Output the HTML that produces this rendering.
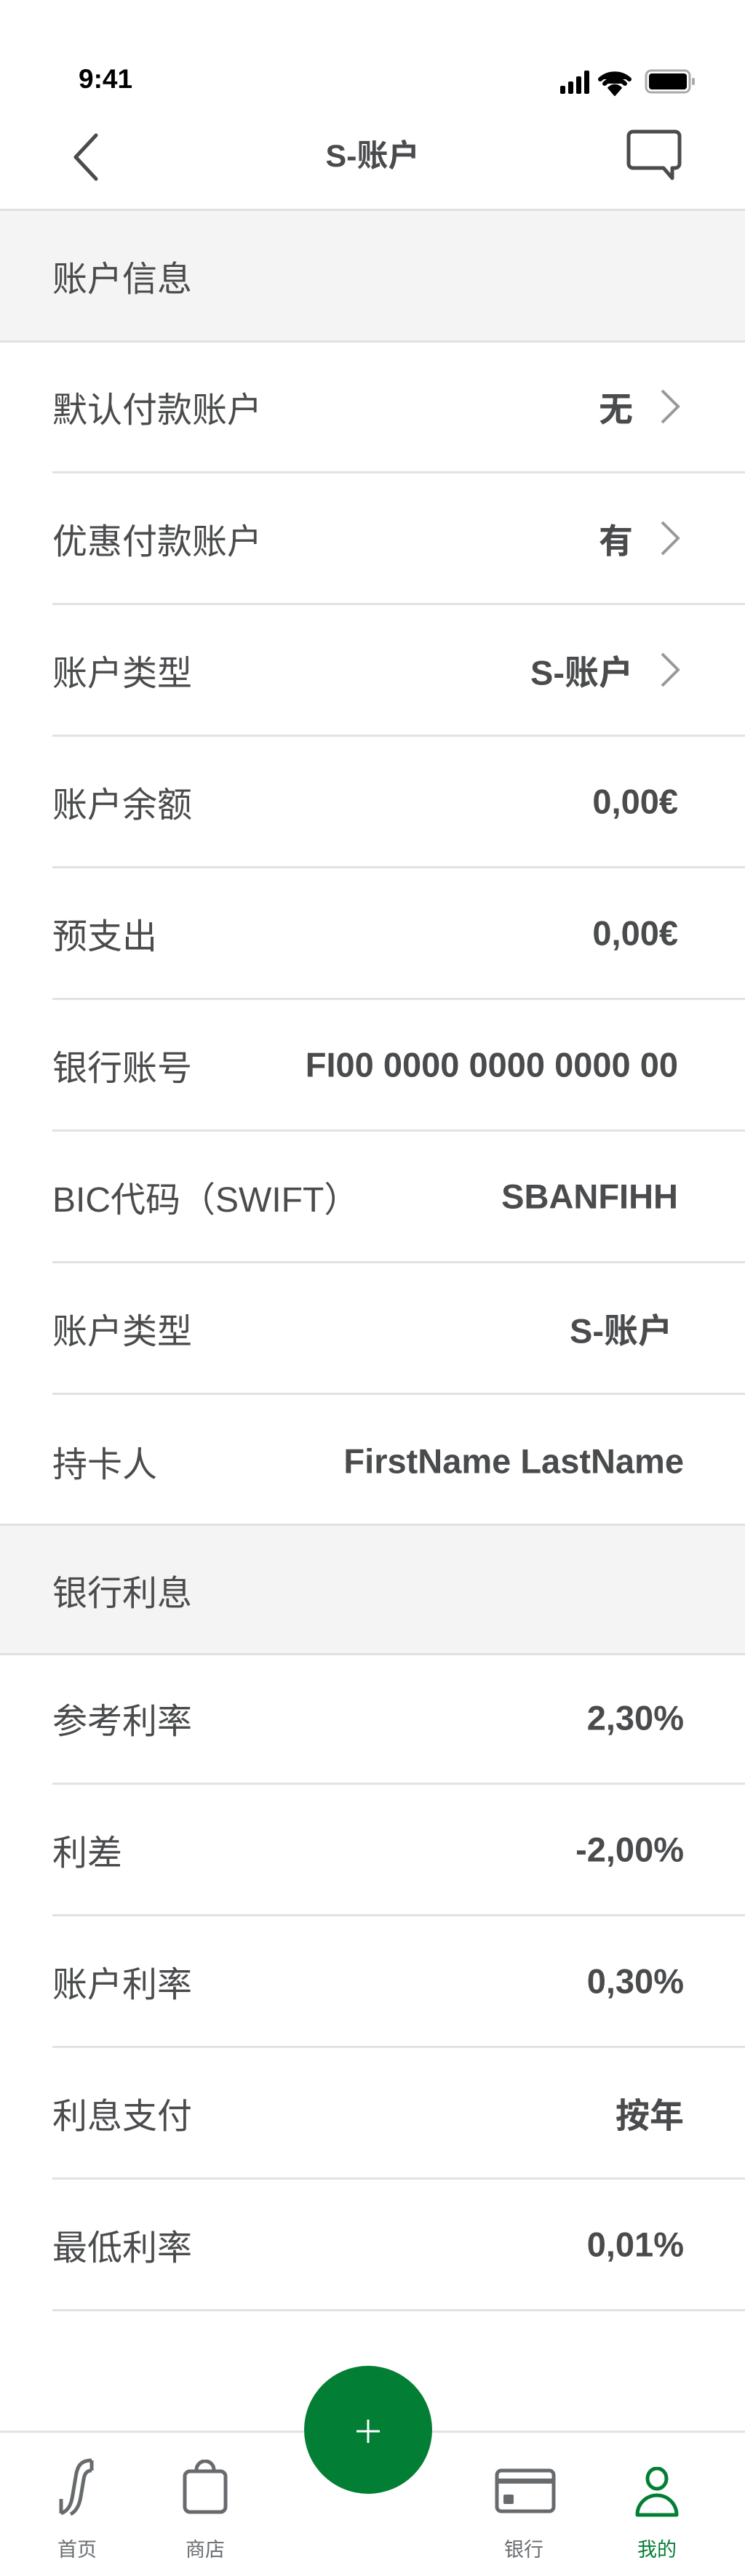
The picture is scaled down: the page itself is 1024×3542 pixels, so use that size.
<!DOCTYPE html>
<html><head><meta charset="utf-8"><style>
*{margin:0;padding:0;box-sizing:border-box}
body{width:1024px;height:3542px;background:#fff;position:relative;font-family:"Liberation Sans","Noto Sans CJK SC",sans-serif;color:#4a4b4d;overflow:hidden}
.abs{position:absolute}
.sec{position:absolute;left:0;width:1024px;background:#f4f4f4;border-top:3px solid #e0e0e0;border-bottom:3px solid #e0e0e0}
.sec span{position:absolute;left:72px;top:50%;transform:translateY(-50%);font-size:48px}
.row{position:absolute;left:72px;right:0;height:181px;border-bottom:3px solid #e2e2e2}
.row .l{position:absolute;left:0;top:50%;transform:translateY(-50%);font-size:48px}
.row .v{position:absolute;right:92px;top:50%;transform:translateY(-50%);font-size:47px;font-weight:bold}
.row .v.c{right:154px}
.row .chev{position:absolute;right:88px;top:50%;margin-top:-24px}
.tab{position:absolute;font-size:27px;color:#6a6d70;transform:translateX(-50%)}
</style></head><body>
<div class="abs" style="left:108px;top:88px;font-size:37px;font-weight:bold;color:#000">9:41</div>
<svg class="abs" style="left:768px;top:92px" width="190" height="40" viewBox="0 0 190 40">
<rect x="2" y="26" width="7" height="11" rx="2" fill="#000"/><rect x="13" y="20" width="7" height="17" rx="2" fill="#000"/><rect x="24" y="13" width="7" height="24" rx="2" fill="#000"/><rect x="35" y="5" width="7" height="32" rx="2" fill="#000"/>
<path d="M57 17a30 30 0 0 1 40 0M63 23a20 20 0 0 1 28 0M77 36l-6-7a9 9 0 0 1 12 0z" stroke="#000" stroke-width="6" fill="#000" stroke-linecap="round"/>
<rect x="120" y="5" width="60" height="30" rx="7" fill="none" stroke="#aaa" stroke-width="3"/><rect x="124" y="9" width="52" height="22" rx="4" fill="#000"/><rect x="183" y="15" width="4" height="10" rx="2" fill="#aaa"/>
</svg>
<svg class="abs" style="left:96px;top:180px" width="50" height="70"><path d="M36 6L8 36l28 30" stroke="#4a4b4d" stroke-width="5" fill="none" stroke-linecap="round" stroke-linejoin="round"/></svg>
<div class="abs" style="left:0;width:1024px;top:180px;text-align:center;font-size:43px;font-weight:bold">S-账户</div>
<svg class="abs" style="left:860px;top:178px" width="80" height="80"><path d="M10 3h58a6 6 0 0 1 6 6v38a6 6 0 0 1-6 6H64v14L52 53H10a6 6 0 0 1-6-6V9a6 6 0 0 1 6-6z" stroke="#4a4b4d" stroke-width="5" fill="none" stroke-linejoin="round"/></svg>

<div class="sec" style="top:287px;height:184px"><span>账户信息</span></div>
<div class="row" style="top:470px"><span class="l">默认付款账户</span><span class="v c">无</span><svg class="chev" width="30" height="48"><path d="M4 2l22 22L4 46" stroke="#999" stroke-width="4" fill="none"/></svg></div>
<div class="row" style="top:651px"><span class="l">优惠付款账户</span><span class="v c">有</span><svg class="chev" width="30" height="48"><path d="M4 2l22 22L4 46" stroke="#999" stroke-width="4" fill="none"/></svg></div>
<div class="row" style="top:832px"><span class="l">账户类型</span><span class="v c">S-账户</span><svg class="chev" width="30" height="48"><path d="M4 2l22 22L4 46" stroke="#999" stroke-width="4" fill="none"/></svg></div>
<div class="row" style="top:1013px"><span class="l">账户余额</span><span class="v">0,00€</span></div>
<div class="row" style="top:1194px"><span class="l">预支出</span><span class="v">0,00€</span></div>
<div class="row" style="top:1375px"><span class="l">银行账号</span><span class="v">FI00 0000 0000 0000 00</span></div>
<div class="row" style="top:1556px"><span class="l">BIC代码（SWIFT）</span><span class="v">SBANFIHH</span></div>
<div class="row" style="top:1737px"><span class="l">账户类型</span><span class="v" style="right:100px">S-账户</span></div>
<div class="row" style="top:1918px;border-bottom:none"><span class="l">持卡人</span><span class="v" style="right:84px">FirstName LastName</span></div>

<div class="sec" style="top:2095px;height:181px"><span>银行利息</span></div>
<div class="row" style="top:2273px"><span class="l">参考利率</span><span class="v" style="right:84px">2,30%</span></div>
<div class="row" style="top:2454px"><span class="l">利差</span><span class="v" style="right:84px">-2,00%</span></div>
<div class="row" style="top:2635px"><span class="l">账户利率</span><span class="v" style="right:84px">0,30%</span></div>
<div class="row" style="top:2816px"><span class="l">利息支付</span><span class="v" style="right:84px">按年</span></div>
<div class="row" style="top:2997px"><span class="l">最低利率</span><span class="v" style="right:84px">0,01%</span></div>

<div class="abs" style="left:0;top:3342px;width:1024px;height:3px;background:#e2e2e2"></div>
<div class="abs" style="left:418px;top:3253px;width:176px;height:176px;border-radius:50%;background:#027f35"></div>
<svg class="abs" style="left:490px;top:3327px" width="32" height="32"><path d="M16 0v32M0 16h32" stroke="#fff" stroke-width="3"/></svg>

<svg class="abs" style="left:80px;top:3380px" width="52" height="82"><path d="M46 3C30 3 26 12 24 26l-4 24c-2 14-6 22-16 26M46 17c-8 0-10 6-11 12l-4 24c-2 12-6 20-14 24M46 3v14M4 76v-20" stroke="#686b6e" stroke-width="5" fill="none"/></svg>
<svg class="abs" style="left:250px;top:3382px" width="64" height="76"><rect x="4" y="16" width="56" height="56" rx="7" stroke="#686b6e" stroke-width="5" fill="none"/><path d="M20 16v-2a12 12 0 0 1 24 0v2" stroke="#686b6e" stroke-width="5" fill="none"/></svg>
<svg class="abs" style="left:680px;top:3394px" width="84" height="62"><rect x="3" y="3" width="78" height="56" rx="6" stroke="#686b6e" stroke-width="5" fill="none"/><rect x="3" y="14" width="78" height="7" fill="#686b6e"/><rect x="12" y="36" width="14" height="13" rx="2" fill="#686b6e"/></svg>
<svg class="abs" style="left:872px;top:3392px" width="62" height="72"><ellipse cx="31" cy="16" rx="13" ry="14" stroke="#027f35" stroke-width="5" fill="none"/><path d="M4 66a27 27 0 0 1 54 0z" stroke="#027f35" stroke-width="5" fill="none" stroke-linejoin="round"/></svg>
<div class="tab" style="left:106px;top:3484px">首页</div>
<div class="tab" style="left:282px;top:3484px">商店</div>
<div class="tab" style="left:720px;top:3484px">银行</div>
<div class="tab" style="left:903px;top:3484px;color:#027f35">我的</div>
</body></html>
